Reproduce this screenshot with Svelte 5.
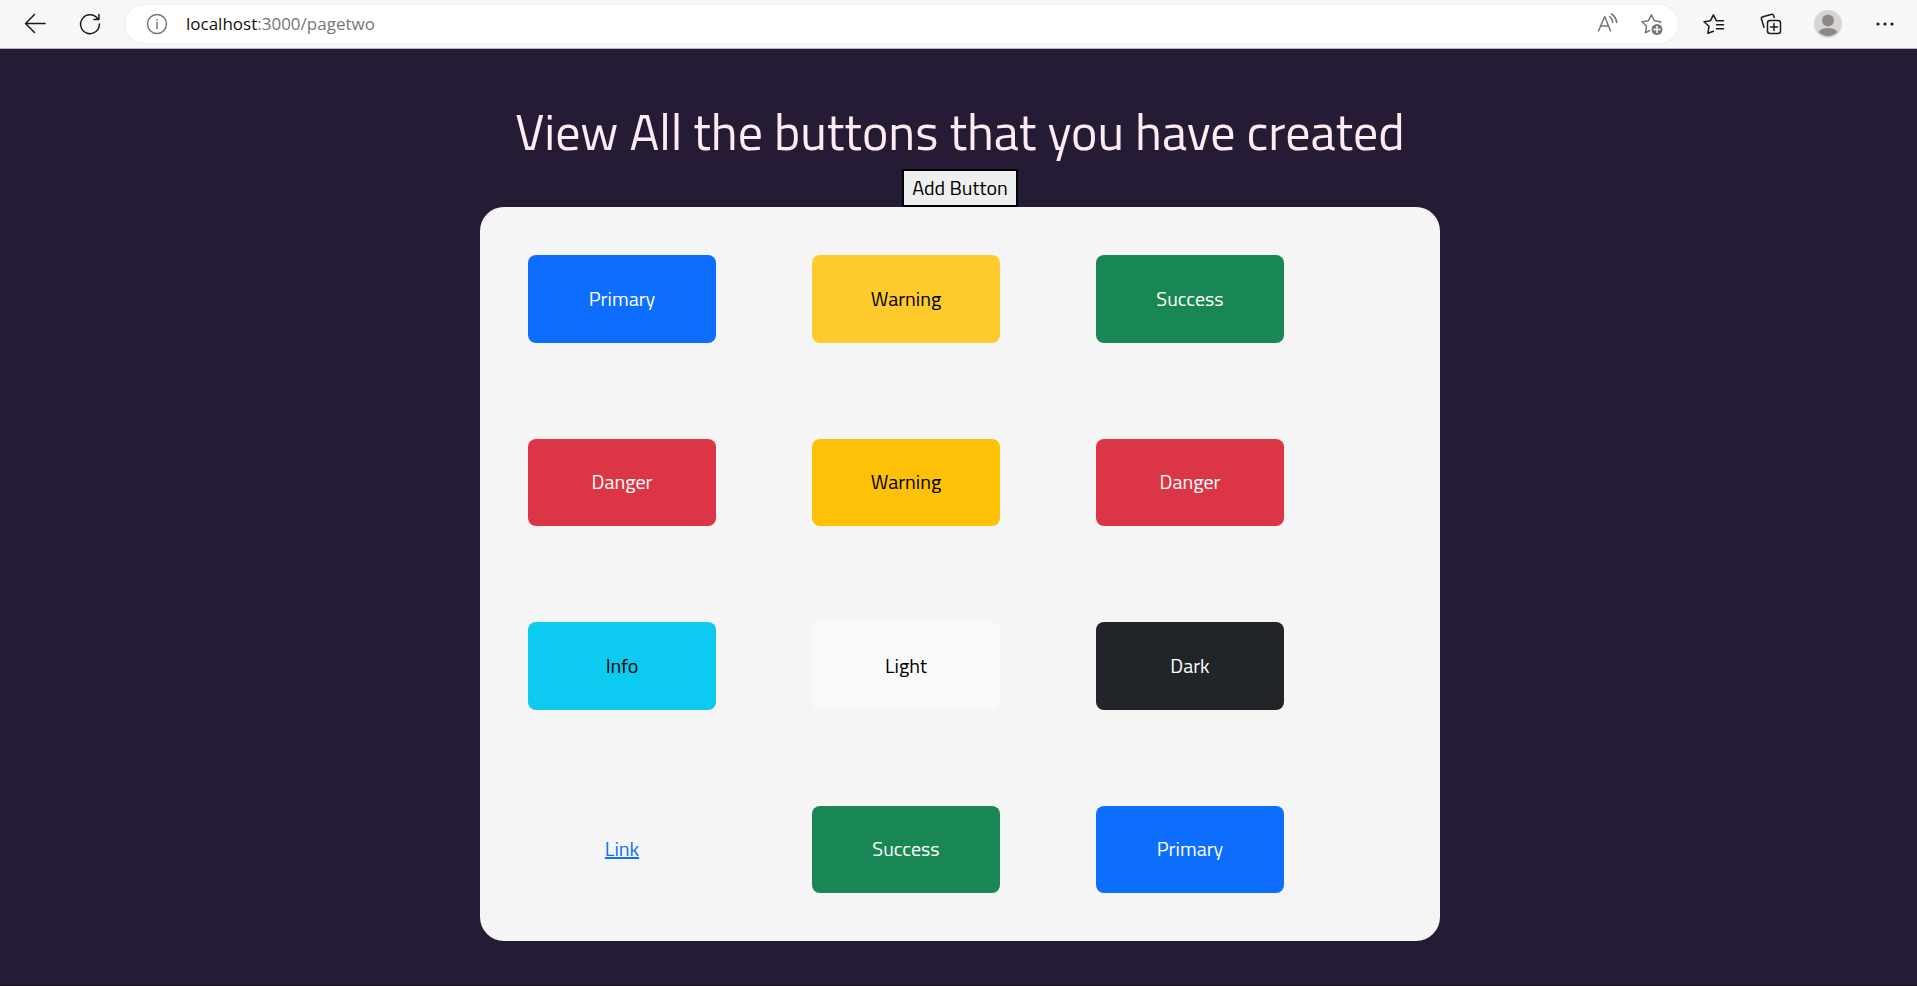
<script>
  const swatches = [
    { label: 'Primary', kind: 'primary' },
    { label: 'Warning', kind: 'warning hovered' },
    { label: 'Success', kind: 'success' },
    { label: 'Danger', kind: 'danger' },
    { label: 'Warning', kind: 'warning' },
    { label: 'Danger', kind: 'danger' },
    { label: 'Info', kind: 'info' },
    { label: 'Light', kind: 'light' },
    { label: 'Dark', kind: 'dark' },
    { label: 'Link', kind: 'link' },
    { label: 'Success', kind: 'success' },
    { label: 'Primary', kind: 'primary' }
  ];
</script>

<div class="window">
  <header class="toolbar">
    <button class="tool" aria-label="Back">
      <svg viewBox="0 0 24 24"><path d="M22 11.500H2.500M11.500 2.500l-9 9 9 9" /></svg>
    </button>
    <button class="tool" aria-label="Refresh">
      <svg viewBox="0 0 24 24"><path d="M19.800 7A9.400 9.400 0 1 0 21.400 12M20.900 2.500v5h-5" /></svg>
    </button>
    <div class="address">
      <button class="mini" aria-label="Site information">
        <svg viewBox="0 0 24 24"><circle cx="12" cy="12" r="9.500" /><path d="M12 10.500v6" /><circle class="solid" cx="12" cy="7.800" r="0.900" /></svg>
      </button>
      <a class="url" href="#top"><span>localhost</span>:3000/pagetwo</a>
      <button class="mini" aria-label="Read aloud">
        <svg viewBox="0 0 24 24"><path d="M2.500 19L8.700 4.500 14.500 19M4.700 14h7.800M13.500 4.500c2 1.400 3 3.300 3.300 5.800M15.500 2c3.200 2 4.800 5 5.200 8.600" /></svg>
      </button>
      <button class="mini" aria-label="Add to favorites">
        <svg viewBox="0 0 24 24"><path d="M9.500 18.600l-4 2.200 1-6.500L2 9.700l6.500-1L11.400 2.800l2.900 5.900 6.500 1-1 .9" /><circle class="solid" cx="17" cy="17.500" r="5.500" /><path class="plus" d="M17 14.500v6M14 17.500h6" /></svg>
      </button>
    </div>
    <button class="tool wide" aria-label="Favorites">
      <svg viewBox="0 0 24 24"><path d="M11.500 19.200l-5.600 2.100 1.100-7L2 9.700l6.500-1L11.400 2.800l2.900 5.900H21.500M14.500 12.700h7M14.500 16.700h7" /></svg>
    </button>
    <button class="tool wide" aria-label="Collections">
      <svg viewBox="0 0 24 24"><rect x="8.500" y="8.500" width="13" height="13" rx="2.500" /><path d="M15 11.500v7M11.500 15h7M15.300 5.500l-.6-1.800a2 2 0 0 0-2.500-1.200L3.800 4.800a2 2 0 0 0-1.300 2.500l2.500 8" /></svg>
    </button>
    <button class="tool wide" aria-label="Profile">
      <svg class="avatar" viewBox="0 0 28 28"><circle cx="14" cy="14" r="14" fill="#d7d4d1" /><circle cx="14" cy="10.500" r="6" fill="#8d8986" /><path d="M4.500 22c2-3 5.500-4 9.500-4s7.500 1 9.500 4a13 13 0 0 1-19 0z" fill="#8d8986" /></svg>
    </button>
    <button class="tool wide" aria-label="Settings and more">
      <svg viewBox="0 0 24 24"><g class="solid"><circle cx="5" cy="12" r="1.600" /><circle cx="12" cy="12" r="1.600" /><circle cx="19" cy="12" r="1.600" /></g></svg>
    </button>
  </header>

  <main id="top">
    <h1>View All the buttons that you have created</h1>
    <button class="add">Add Button</button>
    <section class="card" aria-label="Created buttons">
      {#each swatches as swatch}
        <button class="swatch {swatch.kind}">{swatch.label}</button>
      {/each}
    </section>
  </main>
</div>

<style>
  :global(body) {
    margin: 0;
    background: #251b35;
  }
  * {
    box-sizing: border-box;
  }
  button {
    font-family: inherit;
    cursor: pointer;
  }
  .window {
    display: flex;
    flex-direction: column;
    min-height: 100vh;
    font-family: 'Titillium Web', Roboto, sans-serif;
  }
  .toolbar {
    display: flex;
    align-items: center;
    gap: 15px;
    height: 49px;
    padding: 0 11px 0 15px;
    background: #f7f7f7;
    border-bottom: 1px solid #b9b5bf;
  }
  .tool,
  .mini {
    display: grid;
    place-items: center;
    width: 40px;
    height: 40px;
    padding: 0;
    border: 0;
    background: none;
    color: #1b1b1b;
  }
  .wide {
    width: 42px;
  }
  .mini {
    width: 44px;
    height: 36px;
    color: #767676;
  }
  svg {
    width: 24px;
    height: 24px;
    fill: none;
    stroke: currentColor;
    stroke-width: 1.5;
    stroke-linecap: round;
    stroke-linejoin: round;
  }
  .avatar {
    width: 28px;
    height: 28px;
    stroke: none;
  }
  .solid {
    fill: currentColor;
    stroke: none;
  }
  .plus {
    stroke: #fff;
  }
  .address {
    display: flex;
    flex: 1;
    align-items: center;
    height: 38px;
    padding: 0 4px 0 10px;
    border-radius: 19px;
    background: #fff;
    box-shadow: 0 0 3px #e4e4e4;
  }
  .url {
    flex: 1;
    padding-left: 7px;
    color: #767676;
    font-family: 'Segoe UI', 'Open Sans', sans-serif;
    font-size: 17px;
    line-height: 24px;
    text-decoration: none;
  }
  .url span {
    color: #111;
  }
  main {
    display: flex;
    flex: 1;
    flex-direction: column;
    align-items: center;
    padding: 44px 0 44px 3px;
    border-bottom: 1px solid #17131f;
  }
  h1 {
    margin: 0;
    color: #ffecf2;
    font-size: 50px;
    font-weight: 400;
    line-height: 76px;
    text-align: center;
  }
  .add {
    height: 38px;
    padding: 0 8px;
    border: 2px solid #000;
    background: #efefef;
    color: #000;
    font-size: 20px;
    line-height: 30px;
  }
  .card {
    display: grid;
    flex: 1;
    grid-template-columns: repeat(3, 188px);
    grid-auto-rows: 1fr;
    gap: 96px;
    width: 960px;
    max-width: 100%;
    padding: 48px;
    border-radius: 24px;
    background: #f5f5f5;
  }
  .swatch {
    padding: 24px;
    border: 0;
    border-radius: 8px;
    color: #fff;
    font-size: 20px;
    line-height: 30px;
  }
  .primary { background: #0d6efd; }
  .success { background: #198754; }
  .danger { background: #dc3545; }
  .warning { background: #ffc107; color: #000; }
  .hovered { background: #ffca2c; }
  .info { background: #0dcaf0; color: #000; }
  .light { background: #f8f9fa; color: #000; }
  .dark { background: #212529; }
  .link {
    background: none;
    color: #0d6efd;
    text-decoration: underline;
  }
</style>
